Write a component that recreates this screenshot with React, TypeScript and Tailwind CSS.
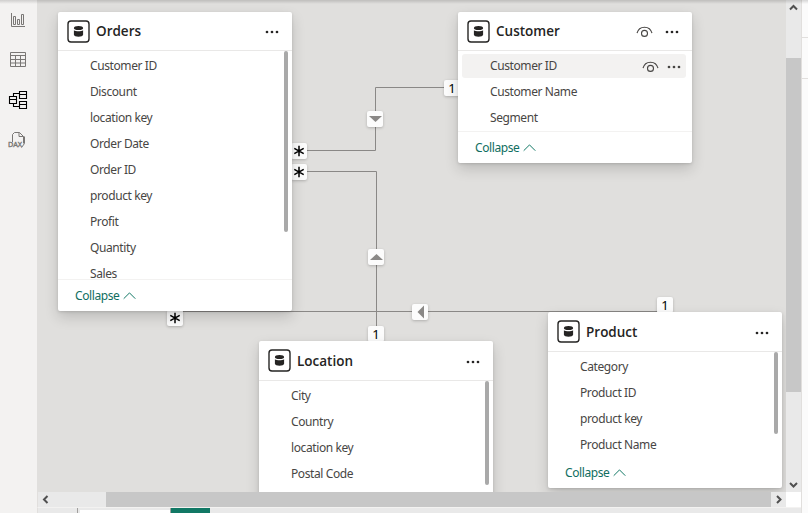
import React from 'react';

const FONT = 'font-["Noto_Sans","Open_Sans",sans-serif]';

function TableIcon() {
  return (
    <svg width="23" height="23" viewBox="0 0 23 23" className="shrink-0">
      <rect x="1" y="1" width="21" height="21" rx="3" fill="#fff" stroke="#252423" strokeWidth="1.4" />
      <ellipse cx="11.5" cy="8" rx="4.6" ry="2" fill="#252423" />
      <path d="M6.900 10.200c1.800 1.400 7.400 1.400 9.200 0v4.600c0 2.600-9.200 2.600-9.200 0z" fill="#252423" />
    </svg>
  );
}

function Dots({ className = '' }: { className?: string }) {
  return (
    <svg width="14" height="4" viewBox="0 0 14 4" className={className} fill="currentColor">
      <circle cx="2" cy="2" r="1.35" />
      <circle cx="7" cy="2" r="1.35" />
      <circle cx="12" cy="2" r="1.35" />
    </svg>
  );
}

function Eye() {
  return (
    <svg width="17" height="12" viewBox="0 0 17 12" fill="none" stroke="#484644" strokeWidth="1.1">
      <path d="M1 7.200C2 3.300 5 1.200 8.500 1.200S15 3.300 16 7.200" />
      <circle cx="8.5" cy="7.4" r="3" />
    </svg>
  );
}

function Collapse() {
  return (
    <div className="flex items-center gap-[3px] pl-[17px] text-[12px] leading-4 tracking-[-0.4px] text-[#0f6e5f]">
      <span className="w-[45px] whitespace-nowrap">Collapse</span>
      <svg width="13" height="8" viewBox="0 0 13 8" fill="none" stroke="#117865" strokeWidth="1">
        <path d="M.7 6.700 6.500.900l5.800 5.800" />
      </svg>
    </div>
  );
}

type CardProps = {
  title: string;
  fields: string[];
  place: string;
  header?: string;
  thumb?: string;
  footer?: string;
  hovered?: boolean;
};

function Card({ title, fields, place, header = 'h-[39px]', thumb, footer, hovered }: CardProps) {
  return (
    <section
      className={`absolute flex w-[234px] flex-col overflow-hidden rounded-[2px] bg-white shadow-[0_6px_14px_rgba(0,0,0,0.16),0_1px_3px_rgba(0,0,0,0.13)] ${place}`}
    >
      <header className={`flex shrink-0 items-center border-b border-[#e9e8e7] pl-[9px] pr-[13px] ${header}`}>
        <TableIcon />
        <h2 className='ml-[6px] flex-1 font-["Open_Sans","Noto_Sans",sans-serif] text-[13.5px] font-semibold leading-5 text-[#252423]'>{title}</h2>
        {hovered && <div className="mr-[12px] pt-[2px]"><Eye /></div>}
        <Dots className="mt-[2px] text-[#252423]" />
      </header>
      <div className="flex min-h-0 flex-1 overflow-hidden">
        <ul className="min-w-0 flex-1 pl-1 pt-[2px]">
          {fields.map((f, i) => (
            <li key={f} className="flex h-[26px] items-center">
              <div
                className={`flex h-6 flex-1 items-center rounded-[3px] pl-7 pr-[5px] ${hovered && i === 0 ? 'bg-[#f3f2f1]' : ''}`}
              >
                <span className="flex-1 whitespace-nowrap text-[12px] leading-3 tracking-[-0.4px] text-[#484644]">{f}</span>
                {hovered && i === 0 && (
                  <>
                    <div className="mr-[8px] pt-[2px]"><Eye /></div>
                    <Dots className="mt-[2px] text-[#484644]" />
                  </>
                )}
              </div>
            </li>
          ))}
        </ul>
        <div className="w-[6px] shrink-0">
          {thumb && <div className={`w-1 rounded-[2px] bg-[#a9a9a9] ${thumb}`} />}
        </div>
        {thumb && <div className="w-[2px] shrink-0" />}
      </div>
      {footer && (
        <footer className={`flex shrink-0 items-center ${footer}`}>
          <Collapse />
        </footer>
      )}
    </section>
  );
}

function Badge({ place, children }: { place: string; children: React.ReactNode }) {
  return (
    <div
      className={`absolute flex h-4 w-4 items-center justify-center rounded-[2px] bg-[#fcfcfc] shadow-[0_1px_3px_rgba(0,0,0,0.22)] ${place}`}
    >
      {children}
    </div>
  );
}

function Star() {
  return (
    <svg width="12" height="12" viewBox="0 0 12 12" stroke="#000" strokeWidth="1.5">
      <path d="M6 .8v10.400M1.300 3.400l9.400 5.200M10.700 3.400 1.300 8.600" />
    </svg>
  );
}

function One() {
  return <span className="text-[13px] leading-4 text-black">1</span>;
}

function Arrow({ d }: { d: string }) {
  return (
    <svg width="16" height="16" viewBox="0 0 16 16" fill="#8a8886">
      <path d={d} />
    </svg>
  );
}

function Sidebar() {
  return (
    <nav className="flex w-[37px] shrink-0 flex-col bg-[#f3f2f1]">
      <svg width="37" height="160" viewBox="0 0 37 160" fill="none" stroke="#797775" strokeWidth="1">
        <path d="M11.5 13v13.5H25M13.5 16.5h2v8h-2zM17.5 19.5h2v5h-2zM21.5 14.5h2v10h-2z" />
        <path d="M10.5 52.5h15v14h-15zM10.5 55.5h15M10.5 59.5h15M10.5 63h15M15.5 56v10M20.5 56v10" />
        <g stroke="#000" strokeWidth="1.1">
          <path d="M9.5 96.5h7v7h-7zM9.5 99.5h7M19.5 91.5h7v7h-7zM19.5 94.5h7M19.5 101.5h7v7h-7zM19.5 104.5h7M13.5 96.5v-3h6M13.5 103.5v3h6" />
        </g>
        <path d="M12.5 142v-7.5l2-2h5l4 4v7M19 132.5v4h4.5" />
        <text x="8" y="147.4" fill="#797775" stroke="#797775" strokeWidth=".35" fontSize="6.6" fontFamily="Noto Sans, sans-serif" textLength="14" lengthAdjust="spacingAndGlyphs">DAX</text>
        <path d="m21.5 147.500 3-4v-7" />
      </svg>
    </nav>
  );
}

function Diagram() {
  return (
    <main className="relative h-[492px] w-[749px] overflow-hidden bg-[#e0dfdd]">
      <svg className="absolute left-0 top-0" width="749" height="492" viewBox="37 0 749 492" fill="none" stroke="#8a8886">
        <path d="M307 150.5h68.5v-63H444" />
        <path d="M307 171.5h69.5V326" />
        <path d="M183 311.5h474" />
      </svg>
      <Badge place="left-[254px] top-[143px]"><Star /></Badge>
      <Badge place="left-[254px] top-[164px]"><Star /></Badge>
      <Badge place="left-[130px] top-[310px]"><Star /></Badge>
      <Badge place="left-[407px] top-[80px]"><One /></Badge>
      <Badge place="left-[331px] top-[326px]"><One /></Badge>
      <Badge place="left-[620px] top-[297px]"><One /></Badge>
      <Badge place="left-[330px] top-[111px]"><Arrow d="M2 5h13l-6.500 6z" /></Badge>
      <Badge place="left-[331px] top-[249px]"><Arrow d="M2 11h13L8.500 5z" /></Badge>
      <Badge place="left-[375px] top-[304px]"><Arrow d="M12 1.500v13L5.500 8z" /></Badge>
      <Card
        title="Location"
        fields={['City', 'Country', 'location key', 'Postal Code']}
        place="left-[222px] top-[341px] h-[180px]"
        header="h-[40px]"
        thumb="h-[104px]"
      />
      <Card
        title="Orders"
        fields={['Customer ID', 'Discount', 'location key', 'Order Date', 'Order ID', 'product key', 'Profit', 'Quantity', 'Sales']}
        place="left-[21px] top-[12px] h-[299px]"
        thumb="h-[181px]"
        footer="h-[32px] border-t border-[#f3f2f1]"
      />
      <Card
        title="Customer"
        fields={['Customer ID', 'Customer Name', 'Segment']}
        place="left-[421px] top-[12px] h-[151px]"
        footer="h-[32px] border-t border-[#f3f2f1]"
        hovered
      />
      <Card
        title="Product"
        fields={['Category', 'Product ID', 'product key', 'Product Name']}
        place="left-[511px] top-[312px] h-[176px]"
        header="h-[40px]"
        thumb="h-[82px]"
        footer="h-[30px]"
      />
    </main>
  );
}

function Chevron({ d }: { d: string }) {
  return (
    <svg width="15" height="15" viewBox="0 0 15 15" fill="none" stroke="#505050" strokeWidth="2">
      <path d={d} />
    </svg>
  );
}

export default function App() {
  return (
    <div className={`relative flex h-[513px] w-[808px] overflow-hidden bg-white ${FONT}`}>
      <Sidebar />
      <div className="flex w-[749px] shrink-0 flex-col">
        <Diagram />
        <div className="flex h-[15px] shrink-0 border-l border-[#e1dfdd] bg-[#e9e9e9]">
          <div className="w-[68px]"><Chevron d="M9.500 4 6 7.500 9.500 11" /></div>
          <div className="w-[665px] bg-[#c7c7c7]" />
          <Chevron d="M6 4l3.500 3.500L6 11" />
        </div>
        <div className="flex h-[6px] items-end border-l border-t border-[#f3f2f1] border-l-[#e1dfdd] bg-[#e9e9e9]">
          <div className="ml-[39px] h-[5px] w-px bg-[#a19f9d]" />
          <div className="ml-[2px] h-[3px] w-[90px] bg-white" />
          <div className="h-[5px] w-px bg-[#a19f9d]" />
          <div className="h-[5px] w-[39px] bg-[#117865]" />
        </div>
      </div>
      <div className="flex w-[15px] shrink-0 flex-col">
        <div className="h-[58px] bg-[#e9e9e9]"><Chevron d="M4 9.500 7.500 6 11 9.500" /></div>
        <div className="h-[334px] bg-[#c7c7c7]" />
        <div className="flex h-[100px] flex-col justify-end bg-[#e9e9e9]"><Chevron d="M4 6l3.500 3.500L11 6" /></div>
        <div className="h-[15px] bg-white" />
        <div className="h-[6px] border-t border-[#f3f2f1] bg-[#e9e9e9]" />
      </div>
      <aside className="flex flex-1 flex-col border-l border-[#e1dfdd] bg-[#fbfbfb]">
        <div className="h-[38px] border-b border-[#e1dfdd]" />
        <div className="h-[41px] border-b border-[#e1dfdd]" />
      </aside>
      <div className="absolute left-0 top-0 h-1 w-full bg-linear-to-b from-black/15 to-transparent" />
    </div>
  );
}
